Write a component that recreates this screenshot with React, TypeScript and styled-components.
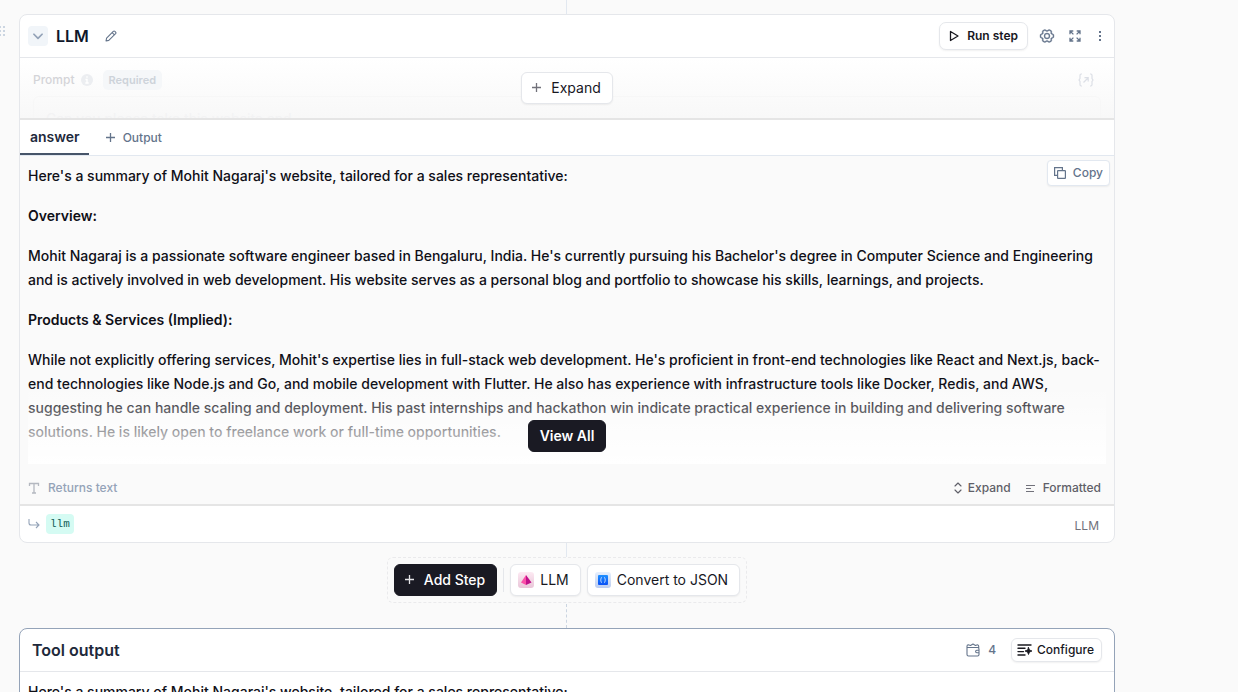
import React from "react";
import styled, { createGlobalStyle, css } from "styled-components";
import { PiGearSix } from "react-icons/pi";

const Global = createGlobalStyle`
  *, *::before, *::after { box-sizing: border-box; }
  body { margin: 0; background: #fafafa; color: #0f172a; font-family: Inter, "Liberation Sans", sans-serif; overflow: hidden; }
  #root { height: 100vh; overflow: hidden; }
  button { font-family: inherit; cursor: pointer; }
  p { margin: 0; }
  svg { display: block; flex: none; }
`;

const Page = styled.main`
  display: flex;
  flex-direction: column;
  padding: 0 123px 0 19px;
`;

const Connector = styled.div<{ $h: number; $dashed?: boolean }>`
  align-self: center;
  width: 2px;
  height: ${(p) => p.$h}px;
  border-left: 1px ${(p) => (p.$dashed ? "dashed #cbd5e1" : "solid #e2e8f0")};
`;

const StepRow = styled.div`
  position: relative;
`;

const DragHandle = styled.div`
  position: absolute;
  left: -20px;
  top: 12px;
  color: #cbd5e1;
`;

const Card = styled.section<{ $active?: boolean }>`
  background: #fff;
  border: 1px solid ${(p) => (p.$active ? "#94a3b8" : "#e5e7eb")};
  border-radius: 8px;
  overflow: hidden;
`;

const CardHeader = styled.header<{ $pad: string }>`
  display: flex;
  align-items: center;
  justify-content: space-between;
  height: 43px;
  padding: ${(p) => p.$pad};
  border-bottom: 1px solid #e5e7eb;
`;

const Group = styled.div<{ $gap: number }>`
  display: flex;
  align-items: center;
  gap: ${(p) => p.$gap}px;
`;

const Title = styled.h2<{ $dark?: boolean }>`
  margin: 0;
  font-size: 16px;
  line-height: 24px;
  font-weight: 600;
  color: ${(p) => (p.$dark ? "#0f172a" : "#1e293b")};
`;

const IconButton = styled.button<{ $w?: number; $filled?: boolean }>`
  display: flex;
  align-items: center;
  justify-content: center;
  width: ${(p) => p.$w ?? 18}px;
  height: 20px;
  padding: 0;
  border: 0;
  border-radius: 4px;
  color: ${(p) => (p.$filled ? "#94a3b8" : "#64748b")};
  background: ${(p) => (p.$filled ? "#f1f5f9" : "none")};
`;

const EditButton = styled(IconButton)`
  margin-left: 5px;
`;

const sizes = {
  sm: css`height: 24px; padding: 0 7px 0 5px; gap: 4px; font-size: 12px; line-height: 16px; border-radius: 6px;`,
  copy: css`height: 26px; padding: 0 6px; gap: 7px; font-size: 12px; line-height: 16px; border-radius: 4px;`,
  md: css`height: 28px; padding: 0 9px 0 8px; gap: 7px; font-size: 12px; line-height: 16px; border-radius: 7px;`,
  lg: css`height: 32px; padding: 0 11px 0 9px; gap: 8px; font-size: 14px; line-height: 20px; border-radius: 6px;`,
  tool: css`height: 32px; padding: 0 11px 0 7px; gap: 6px; font-size: 14px; line-height: 20px; border-radius: 6px;`,
  plain: css`height: 32px; padding: 0 11px; font-size: 14px; line-height: 20px; border-radius: 6px;`,
};

const Button = styled.button<{ $size: keyof typeof sizes; $tone?: "dark" | "muted"; $weight?: number }>`
  display: flex;
  align-items: center;
  justify-content: center;
  white-space: nowrap;
  font-weight: ${(p) => p.$weight ?? 400};
  border: 1px solid ${(p) => (p.$tone === "dark" ? "#1a1a23" : p.$tone === "muted" ? "#e2e8f0" : "#e5e7eb")};
  background: ${(p) => (p.$tone === "dark" ? "#1a1a23" : "#fff")};
  color: ${(p) => (p.$tone === "dark" ? "#fff" : p.$tone === "muted" ? "#64748b" : "#18181f")};
  box-shadow: ${(p) => (p.$tone === "dark" ? "none" : "0 1px 2px rgba(0, 0, 0, 0.06)")};
  ${(p) => sizes[p.$size]}
`;

const PromptPreview = styled.div`
  position: relative;
  display: flex;
  flex-direction: column;
  height: 62px;
  overflow: hidden;
  padding: 12px 13px 0;
  border-bottom: 2px solid #e5e5e5;
  background: linear-gradient(#ffffff, #f8f8f8);
`;

const PromptHead = styled.div`
  display: flex;
  align-items: center;
  justify-content: space-between;
  height: 20px;
  padding-right: 7px;
  font-size: 12px;
  line-height: 16px;
  font-weight: 500;
  color: #d4d4d8;
`;

const Badge = styled.span`
  height: 20px;
  margin-left: 4px;
  padding: 0 6px;
  border-radius: 5px;
  background: #f5f7f9;
  color: #cdd3da;
  font-size: 11px;
  line-height: 20px;
  font-weight: 600;
`;

const PromptField = styled.div`
  flex: none;
  margin-top: 6px;
  padding: 10px 12px;
  border: 1px solid #f7f7f7;
  border-radius: 6px;
  font-size: 14px;
  line-height: 24px;
  color: #f3f3f4;
  white-space: nowrap;
`;

const Centered = styled.div<{ $top: number }>`
  position: absolute;
  top: ${(p) => p.$top}px;
  left: 0;
  right: 0;
  display: flex;
  justify-content: center;
`;

const Tabs = styled.div`
  display: flex;
  height: 36px;
  border-bottom: 1px solid #e2e8f0;
`;

const Tab = styled.button`
  height: 35px;
  padding: 0 9px 0 10px;
  border: 0;
  border-bottom: 2px solid #475569;
  background: none;
  font-size: 14px;
  line-height: 20px;
  font-weight: 600;
  color: #1e293b;
`;

const AddOutput = styled.button`
  display: flex;
  align-items: center;
  gap: 6px;
  margin-left: 16px;
  padding: 0;
  border: 0;
  background: none;
  font-size: 12px;
  line-height: 16px;
  font-weight: 500;
  color: #64748b;
`;

const Output = styled.div`
  background: #fafafa;
`;

const OutputBody = styled.div`
  position: relative;
`;

const CopyHolder = styled.div`
  position: absolute;
  top: 4px;
  right: 4px;
`;

const Prose = styled.div`
  display: flex;
  flex-direction: column;
  gap: 16px;
  padding: 8px 8px 20px;
  font-size: 14px;
  line-height: 24px;
  font-weight: 450;
  color: #0f0f17;
  strong { font-weight: 600; }
`;

const Fade = styled.div`
  position: absolute;
  left: 8px;
  right: 8px;
  bottom: 0;
  height: 80px;
  background: linear-gradient(rgba(255, 255, 255, 0), #fff);
`;

const OutputFooter = styled.div`
  display: flex;
  align-items: center;
  justify-content: space-between;
  height: 42px;
  padding: 8px 13px 0 8px;
  border-bottom: 2px solid #e5e5e5;
  font-size: 12px;
  line-height: 16px;
  color: #94a3b8;
  font-weight: 500;
`;

const TextButton = styled.button`
  display: flex;
  align-items: center;
  gap: 4px;
  padding: 0;
  border: 0;
  background: none;
  font-size: 12px;
  line-height: 16px;
  font-weight: 500;
  color: #5f5f68;
`;

const CardFooter = styled.footer`
  display: flex;
  align-items: center;
  justify-content: space-between;
  height: 36px;
  padding: 0 15px 0 8px;
`;

const StepType = styled.span`
  padding-top: 3px;
  font-size: 12px;
  line-height: 16px;
  color: #71717a;
`;

const Code = styled.code`
  height: 20px;
  padding: 0 4px;
  border-radius: 4px;
  background: #d5fbf3;
  color: #115e59;
  font-family: "Liberation Mono", monospace;
  font-size: 11px;
  line-height: 20px;
`;

const AddBar = styled.nav`
  align-self: center;
  display: flex;
  align-items: center;
  gap: 6px;
  margin-bottom: 1px;
  padding: 6px;
  border: 1px dashed #eaeaec;
  border-radius: 6px;
`;

const Divider = styled.span`
  width: 1px;
  height: 24px;
  background: #e5e7eb;
`;

const Credits = styled.span`
  display: flex;
  align-items: center;
  gap: 8px;
  font-size: 12px;
  line-height: 16px;
  font-weight: 500;
  color: #64748b;
`;

const Stroke = ({ size, w, d }: { size: number; w: number; d: string }) => (
  <svg width={size} height={size} viewBox="0 0 24 24" fill="none" stroke="currentColor" strokeWidth={w} strokeLinecap="round" strokeLinejoin="round" aria-hidden="true">
    <path d={d} />
  </svg>
);

const Plus = ({ color = "currentColor" }: { color?: string }) => (
  <svg width="12" height="12" viewBox="0 0 12 12" stroke={color} strokeWidth="1.3" aria-hidden="true">
    <path d="M5.500 1v9M1 5.500h9" />
  </svg>
);

const Pencil = () => (
  <svg width="12" height="12" viewBox="0 0 12 12" fill="none" stroke="#64748b" strokeWidth="1.1" strokeLinejoin="round" aria-hidden="true">
    <path d="M1 11l.6-2.800L8.300 1.400q.8-.7 1.600 0l.7.7q.7.800 0 1.600L3.800 10.400zM7.200 2.600l2.200 2.200" />
  </svg>
);

const ExpandCorners = () => (
  <svg width="12" height="12" viewBox="0 0 12 12" fill="none" stroke="#64748b" strokeWidth="1.3" aria-hidden="true">
    <path d="M1 4.300V1h3.300M1 1l3.400 3.400M7.700 1H11v3.300M11 1L7.600 4.400M1 7.700V11h3.300M1 11l3.400-3.400M7.700 11H11V7.700M11 11L7.600 7.600" />
  </svg>
);

const Dots = () => (
  <svg width="4" height="12" viewBox="0 0 4 12" fill="#64748b" aria-hidden="true">
    <rect x="1" y="1" width="2" height="2" />
    <rect x="1" y="5" width="2" height="2" />
    <rect x="1" y="9" width="2" height="2" />
  </svg>
);

const Info = () => (
  <svg width="12" height="12" viewBox="0 0 12 12" aria-hidden="true">
    <circle cx="6" cy="6" r="6" fill="#eceef1" />
    <path d="M6 2.300v1.500M4.500 5.500H6V9M4.300 9h3.400" stroke="#fff" strokeWidth="1.4" fill="none" />
  </svg>
);

const Variable = () => (
  <svg width="16" height="14" viewBox="0 0 16 14" fill="none" stroke="#dcdfe6" strokeWidth="1.2" aria-hidden="true">
    <path d="M4 1H3.200Q2 1 2 2.500v3L1 7l1 1.500v3Q2 13 3.200 13H4M12 1h.8Q14 1 14 2.500v3L15 7l-1 1.500v3q0 1.500-1.200 1.500H12M5.500 9.500l4.500-4.500M6.500 4.700h3.700v3.700" />
  </svg>
);

const CopyIcon = () => (
  <svg width="12" height="12" viewBox="0 0 12 12" fill="none" stroke="#64748b" strokeWidth="1.2" aria-hidden="true">
    <rect x="3.600" y="3.600" width="7.800" height="7.800" rx=".5" />
    <path d="M3.600 8.400H.6V.6h7.800v3" />
  </svg>
);

const Pyramid = () => (
  <svg width="16" height="16" viewBox="0 0 16 16" aria-hidden="true">
    <defs>
      <linearGradient id="pinkBg" x1="0" y1="0" x2="0" y2="1">
        <stop stopColor="#fdeaf3" />
        <stop offset="1" stopColor="#e9c5d8" />
      </linearGradient>
    </defs>
    <rect width="16" height="16" rx="3" fill="url(#pinkBg)" />
    <path d="M8 3L3 10.500 8 13z" fill="#fb4fa8" />
    <path d="M8 3l5.500 7.500L8 13z" fill="#c0108a" />
  </svg>
);

const JsonIcon = () => (
  <svg width="16" height="16" viewBox="0 0 16 16" aria-hidden="true">
    <defs>
      <linearGradient id="blueBg" x1="0" y1="0" x2="0" y2="1">
        <stop stopColor="#e6effd" />
        <stop offset="1" stopColor="#bccdf0" />
      </linearGradient>
      <linearGradient id="blueFg" x1="0" y1="0" x2="0" y2="1">
        <stop stopColor="#1e90ff" />
        <stop offset="1" stopColor="#0a50f5" />
      </linearGradient>
    </defs>
    <rect width="16" height="16" rx="3" fill="url(#blueBg)" />
    <rect x="3" y="3" width="10" height="10" rx="1" fill="url(#blueFg)" />
    <path d="M7 5.500q-1 0-1 1v.7L5.400 8l.6.8v.7q0 1 1 1M9 5.500q1 0 1 1v.7l.6.800-.6.800v.7q0 1-1 1" fill="none" stroke="#cfe4ff" strokeWidth=".9" />
  </svg>
);

const Wallet = () => (
  <svg width="14" height="14" viewBox="0 0 14 14" fill="none" stroke="#64748b" strokeWidth="1.1" strokeLinejoin="round" aria-hidden="true">
    <path d="M1 4.500h10.500q1.500 0 1.500 1.500v5.500q0 1.500-1.500 1.500h-9Q1 13 1 11.500V3.200Q1 2 2.300 1.800L4.500 2.500 7 1l2.500 1.500 2-.7q1.200.2 1.200 1.400V5M13 7.300h-2.200a1.200 1.200 0 000 2.400H13" />
  </svg>
);

const ConfigureIcon = () => (
  <svg width="16" height="14" viewBox="0 0 16 14" fill="none" stroke="#18181f" strokeWidth="1.4" strokeLinecap="round" aria-hidden="true">
    <path d="M1 2h13M1 5.300h7M1 8.600h5.500M1 12h7" />
    <path d="M11.500 4.500l1 2.500 2.500 1-2.500 1-1 2.500-1-2.500L8 8l2.500-1z" fill="#18181f" strokeWidth=".8" />
  </svg>
);

const Serif = () => (
  <svg width="12" height="12" viewBox="0 0 12 12" fill="none" stroke="#b4b8c0" strokeWidth="1.3" aria-hidden="true">
    <path d="M1.500 4V1.500h9V4M6 1.500v9.500M4 11h4" />
  </svg>
);

const Lines = () => (
  <svg width="14" height="12" viewBox="0 0 14 12" stroke="#71717a" strokeWidth="1" aria-hidden="true">
    <path d="M1 3.500h9M1 6.500h5M1 9.500h8" />
  </svg>
);

const ReturnArrow = () => (
  <svg width="12" height="10" viewBox="0 0 12 10" fill="none" stroke="#94a3b8" strokeWidth="1.1" aria-hidden="true">
    <path d="M1 0v4q0 2 2 2h8M8 3l3 3-3 3" />
  </svg>
);

const Grip = () => (
  <svg width="6" height="10" viewBox="0 0 6 10" fill="currentColor" aria-hidden="true">
    {[0, 4, 8].map((y) => (
      <React.Fragment key={y}>
        <rect x="0" y={y} width="2" height="2" />
        <rect x="4" y={y} width="2" height="2" />
      </React.Fragment>
    ))}
  </svg>
);

const SUMMARY = "Here's a summary of Mohit Nagaraj's website, tailored for a sales representative:";

export default function App() {
  return (
    <>
      <Global />
      <Page>
        <Connector $h={14} />
        <StepRow>
          <DragHandle><Grip /></DragHandle>
          <Card>
            <CardHeader $pad="0 8px">
              <Group $gap={8}>
                <IconButton $w={20} $filled aria-label="Collapse">
                  <Stroke size={14} w={3} d="M5 9l7 7 7-7" />
                </IconButton>
                <Title $dark>LLM</Title>
                <EditButton aria-label="Rename"><Pencil /></EditButton>
              </Group>
              <Group $gap={10}>
                <Button $size="md" $weight={600}>
                  <Stroke size={12} w={2.6} d="M5 3l15 9-15 9z" />
                  Run step
                </Button>
                <IconButton aria-label="Settings"><PiGearSix size={16} strokeWidth={6} /></IconButton>
                <IconButton aria-label="Full screen"><ExpandCorners /></IconButton>
                <IconButton $w={12} aria-label="More"><Dots /></IconButton>
              </Group>
            </CardHeader>
            <PromptPreview>
              <PromptHead>
                <Group $gap={6}>
                  Prompt
                  <Info />
                  <Badge>Required</Badge>
                </Group>
                <Variable />
              </PromptHead>
              <PromptField>Can you please take this website and</PromptField>
              <Centered $top={14}>
                <Button $size="lg"><Plus color="#71717a" />Expand</Button>
              </Centered>
            </PromptPreview>
            <Tabs>
              <Tab>answer</Tab>
              <AddOutput><Plus />Output</AddOutput>
            </Tabs>
            <Output>
              <OutputBody>
                <Prose>
                  <p>{SUMMARY}</p>
                  <p><strong>Overview:</strong></p>
                  <p>
                    Mohit Nagaraj is a passionate software engineer based in Bengaluru, India. He's currently pursuing his Bachelor's degree in Computer Science and Engineering and is actively involved in web development. His website serves as a personal blog and portfolio to showcase his skills, learnings, and projects.
                  </p>
                  <p><strong>Products &amp; Services (Implied):</strong></p>
                  <p>
                    While not explicitly offering services, Mohit's expertise lies in full-stack web development. He's proficient in front-end technologies like React and Next.js, back-end technologies like Node.js and Go, and mobile development with Flutter. He also has experience with infrastructure tools like Docker, Redis, and AWS, suggesting he can handle scaling and deployment. His past internships and hackathon win indicate practical experience in building and delivering software solutions. He is likely open to freelance work or full-time opportunities.
                  </p>
                </Prose>
                <Fade />
                <Centered $top={264}>
                  <Button $size="plain" $tone="dark" $weight={600}>View All</Button>
                </Centered>
                <CopyHolder>
                  <Button $size="copy" $tone="muted" $weight={500}><CopyIcon />Copy</Button>
                </CopyHolder>
              </OutputBody>
              <OutputFooter>
                <Group $gap={8}><Serif />Returns text</Group>
                <Group $gap={14}>
                  <TextButton><Stroke size={12} w={2.3} d="M6 8l6-6 6 6M6 16l6 6 6-6" />Expand</TextButton>
                  <TextButton><Lines />Formatted</TextButton>
                </Group>
              </OutputFooter>
            </Output>
            <CardFooter>
              <Group $gap={6}><ReturnArrow /><Code>llm</Code></Group>
              <StepType>LLM</StepType>
            </CardFooter>
          </Card>
        </StepRow>
        <Connector $h={14} />
        <AddBar>
          <Button $size="lg" $tone="dark" $weight={500}><Plus color="#e4e4e7" />Add Step</Button>
          <Divider />
          <Button $size="tool"><Pyramid />LLM</Button>
          <Button $size="tool"><JsonIcon />Convert to JSON</Button>
        </AddBar>
        <Connector $h={24} $dashed />
        <Card $active>
          <CardHeader $pad="0 12px">
            <Title>Tool output</Title>
            <Group $gap={15}>
              <Credits><Wallet />4</Credits>
              <Button $size="sm" $weight={500}><ConfigureIcon />Configure</Button>
            </Group>
          </CardHeader>
          <Prose><p>{SUMMARY}</p></Prose>
        </Card>
      </Page>
    </>
  );
}
